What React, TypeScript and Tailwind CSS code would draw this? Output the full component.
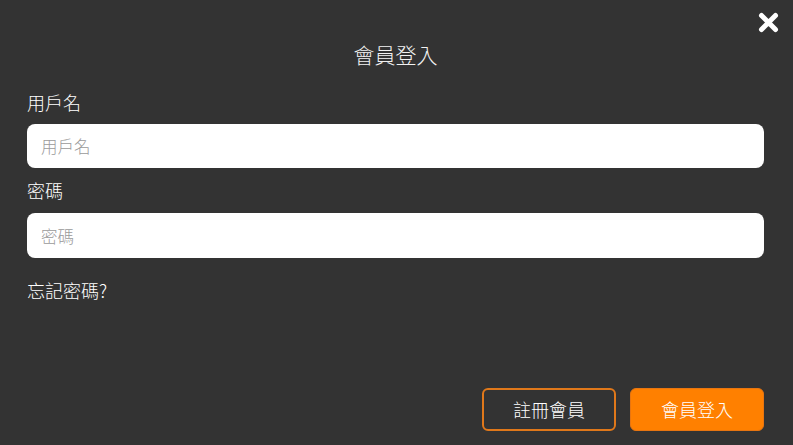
import React from "react";

export default function App() {
  return (
    <div
      className="relative flex h-[445px] w-[793px] flex-col bg-[#333333] pb-[14px] pl-[27px] pr-[29px] pt-[40px] font-light text-white"
      style={{ fontFamily: '"Noto Sans CJK TC", "Noto Sans", sans-serif' }}
    >
      <button className="absolute right-[14px] top-[12px] h-[21px] w-[21px]">
        <svg viewBox="0 0 21 21" className="h-[21px] w-[21px]">
          <path d="M3.5 3.5 L17.5 17.5 M17.5 3.5 L3.5 17.5" stroke="#ffffff" strokeWidth="5" strokeLinecap="round" fill="none" />
        </svg>
      </button>
      <h2 className="text-center text-[21px] font-light leading-[28px] text-[#f2f2f2]">會員登入</h2>
      <label className="mt-[22px] text-[18px] leading-[24px]">用戶名</label>
      <input
        placeholder="用戶名"
        className="mt-[10px] h-[44px] w-full rounded-[8px] bg-white px-[14px] text-[16.5px] font-light text-[#333] outline-none placeholder:text-[#9a9a9a]"
      />
      <label className="mt-[10px] text-[18px] leading-[24px]">密碼</label>
      <input
        type="password"
        placeholder="密碼"
        className="mt-[11px] h-[45px] w-full rounded-[8px] bg-white px-[14px] text-[16.5px] font-light text-[#333] outline-none placeholder:text-[#9a9a9a]"
      />
      <div className="mt-[20px] text-[18px] leading-[24px]">忘記密碼?</div>
      <div className="flex-1" />
      <div className="flex justify-end gap-[14px]">
        <button className="h-[43px] w-[134px] rounded-[6px] border-2 border-[#e0781a] bg-transparent text-[18px] font-light text-white">
          註冊會員
        </button>
        <button className="h-[43px] w-[134px] rounded-[6px] border border-[#e87510] bg-[#ff8000] text-[18px] font-light text-white">
          會員登入
        </button>
      </div>
    </div>
  );
}
